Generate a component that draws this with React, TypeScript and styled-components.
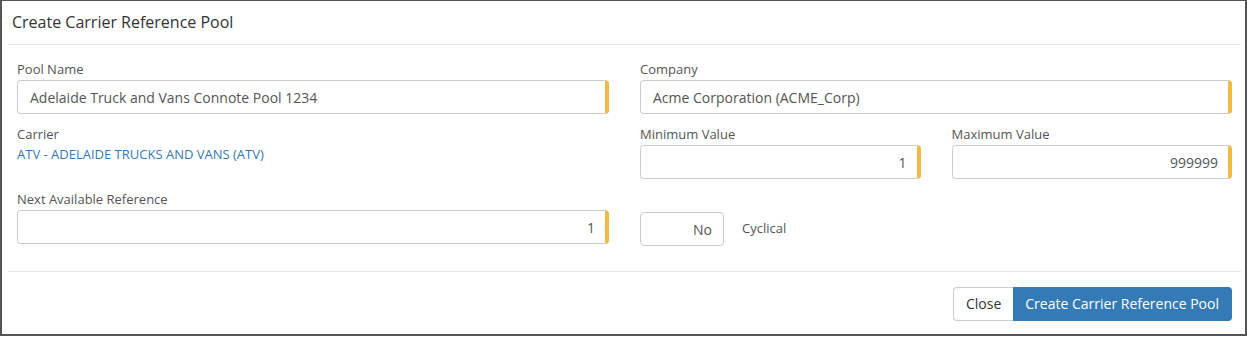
import React from "react";
import styled, { createGlobalStyle } from "styled-components";

const GlobalStyle = createGlobalStyle`
  html, body { margin: 0; padding: 0; background: #fff; }
  body { font-family: "Open Sans", "Liberation Sans", Arial, sans-serif; color: #333; }
  * { box-sizing: border-box; }
`;

const Frame = styled.div`
  width: 1247px;
  height: 336px;
  border: 2px solid #555;
  border-top-width: 1px;
  box-shadow: 0 1px 0 #c8c8c8;
  background: #fff;
  display: flex;
  flex-direction: column;
`;

const Inner = styled.div`
  margin: 0 4px 0 6px;
  display: flex;
  flex-direction: column;
  flex: 1;
`;

const Header = styled.div`
  height: 44px;
  border-bottom: 1px solid #e5e5e5;
  display: flex;
  align-items: center;
  padding: 0 4px 1px;
`;

const Title = styled.h4`
  margin: 0;
  font-size: 16px;
  font-weight: 400;
  color: #333;
  line-height: 20px;
`;

const Body = styled.div`
  padding: 15px 9px 25px;
  display: grid;
  grid-template-columns: 1fr 1fr;
  column-gap: 31px;
  row-gap: 11px;
  border-bottom: 1px solid #e5e5e5;
`;

const SubGrid = styled.div`
  display: grid;
  grid-template-columns: 1fr 1fr;
  column-gap: 31px;
`;

const Field = styled.div`
  display: flex;
  flex-direction: column;
`;

const Label = styled.label`
  font-size: 13px;
  line-height: 18px;
  color: #555;
  margin-bottom: 2px;
`;

const Input = styled.div<{ $align?: "left" | "right" }>`
  height: 34px;
  border: 1px solid #ccc;
  border-right: 4px solid #f5b841;
  border-radius: 4px;
  padding: 0 ${(p) => (p.$align === "right" ? "10px" : "12px")};
  display: flex;
  align-items: center;
  justify-content: ${(p) => (p.$align === "right" ? "flex-end" : "flex-start")};
  font-size: 14px;
  color: #555;
  white-space: nowrap;
`;

const Link = styled.a`
  font-size: 13px;
  line-height: 18px;
  color: #337ab7;
  text-decoration: none;
`;

const ToggleRow = styled.div`
  display: flex;
  align-items: center;
  gap: 18px;
  margin-top: 22px;
`;

const Toggle = styled.div`
  width: 84px;
  height: 34px;
  border: 1px solid #ccc;
  border-radius: 4px;
  display: flex;
  align-items: center;
  justify-content: flex-end;
  padding-right: 11px;
  font-size: 14px;
  color: #555;
`;

const ToggleLabel = styled.span`
  font-size: 13px;
  color: #555;
  margin-top: -3px;
`;

const Footer = styled.div`
  padding: 15px 9px 0;
  display: flex;
  justify-content: flex-end;
`;

const Button = styled.button<{ $primary?: boolean }>`
  height: 34px;
  padding: 0 12px;
  font-family: inherit;
  font-size: 14px;
  line-height: 20px;
  border: 1px solid ${(p) => (p.$primary ? "#337ab7" : "#ccc")};
  background: ${(p) => (p.$primary ? "#337ab7" : "#fff")};
  color: ${(p) => (p.$primary ? "#fff" : "#333")};
  border-radius: ${(p) => (p.$primary ? "0 4px 4px 0" : "4px 0 0 4px")};
  ${(p) => (p.$primary ? "border-left: none;" : "border-right: none;")}
  cursor: pointer;
`;

const ButtonGroup = styled.div`
  display: flex;
`;

export default function App() {
  return (
    <>
      <GlobalStyle />
      <Frame>
        <Inner>
          <Header>
            <Title>Create Carrier Reference Pool</Title>
          </Header>
          <Body>
            <Field>
              <Label>Pool Name</Label>
              <Input>Adelaide Truck and Vans Connote Pool 1234</Input>
            </Field>
            <Field>
              <Label>Company</Label>
              <Input>Acme Corporation (ACME_Corp)</Input>
            </Field>
            <Field>
              <Label>Carrier</Label>
              <Link href="#">ATV - ADELAIDE TRUCKS AND VANS (ATV)</Link>
            </Field>
            <SubGrid>
              <Field>
                <Label>Minimum Value</Label>
                <Input $align="right">1</Input>
              </Field>
              <Field>
                <Label>Maximum Value</Label>
                <Input $align="right">999999</Input>
              </Field>
            </SubGrid>
            <Field>
              <Label>Next Available Reference</Label>
              <Input $align="right">1</Input>
            </Field>
            <ToggleRow>
              <Toggle>No</Toggle>
              <ToggleLabel>Cyclical</ToggleLabel>
            </ToggleRow>
          </Body>
          <Footer>
            <ButtonGroup>
              <Button>Close</Button>
              <Button $primary>Create Carrier Reference Pool</Button>
            </ButtonGroup>
          </Footer>
        </Inner>
      </Frame>
    </>
  );
}
